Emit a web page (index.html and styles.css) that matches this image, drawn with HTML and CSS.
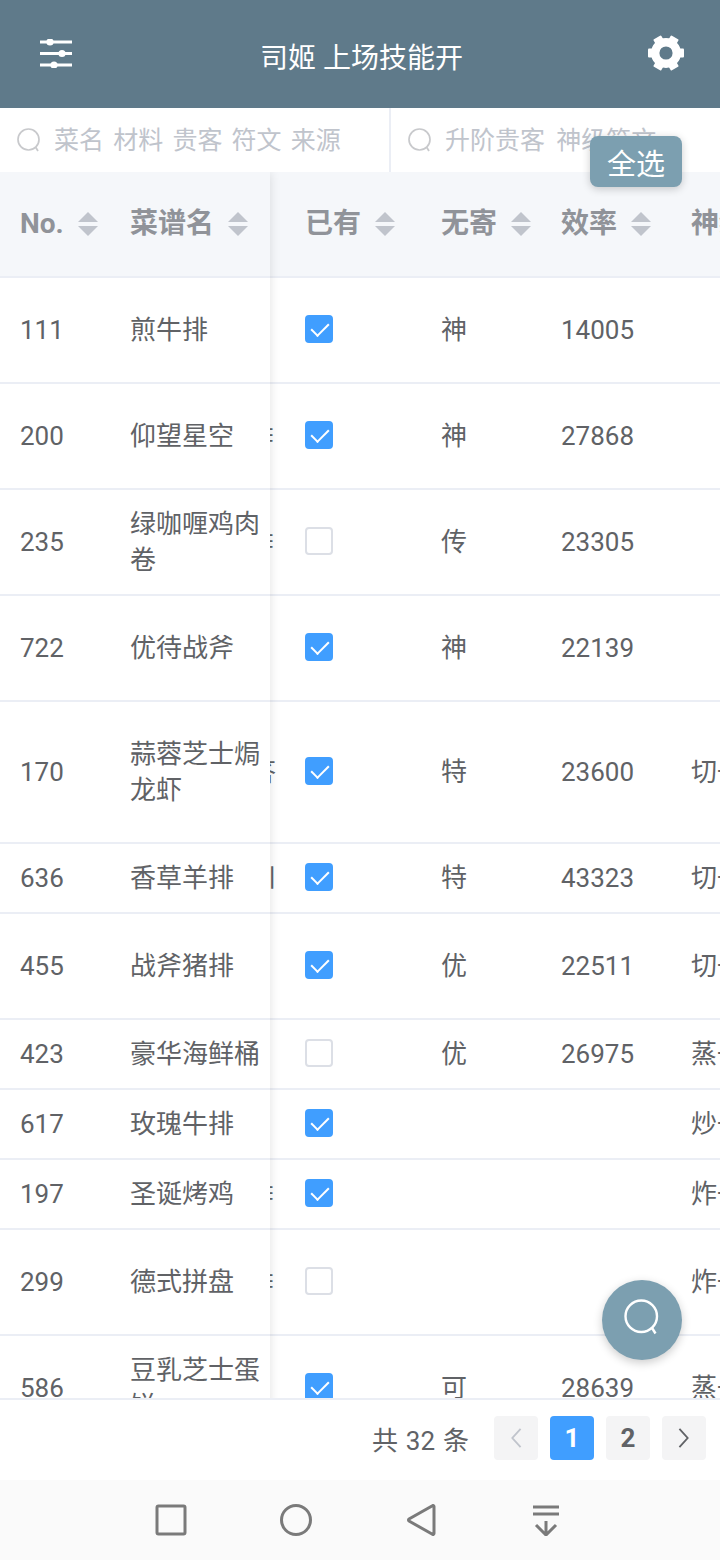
FILE: index.html
```html
<!DOCTYPE html>
<html lang="zh-CN">
<head>
    <meta charset="UTF-8">
    <meta name="viewport" content="width=device-width, initial-scale=1.0">
    <title>司姬 上场技能开</title>
    <link rel="stylesheet" href="styles.css">
</head>
<body>
    <div id="app">
        <header class="topbar">
            <svg class="topbar-icon sliders" viewBox="0 0 32 29">
                <path d="M0 3h32M0 14.500h32M0 26h32" stroke="#fff" stroke-width="2.800"/>
                <circle cx="10" cy="3" r="3.600" fill="#fff"/>
                <circle cx="22" cy="14.500" r="3.600" fill="#fff"/>
                <circle cx="14" cy="26" r="3.600" fill="#fff"/>
            </svg>
            <h1 class="title">司姬 上场技能开</h1>
            <svg class="topbar-icon gear" viewBox="0 0 36 36">
                <circle cx="18" cy="18" r="10.800" fill="none" stroke="#fff" stroke-width="8.400"/>
                <g fill="#fff">
                    <rect x="29" y="13.500" width="7" height="9" rx="1"/>
                    <rect x="29" y="13.500" width="7" height="9" rx="1" transform="rotate(60 18 18)"/>
                    <rect x="29" y="13.500" width="7" height="9" rx="1" transform="rotate(120 18 18)"/>
                    <rect x="29" y="13.500" width="7" height="9" rx="1" transform="rotate(180 18 18)"/>
                    <rect x="29" y="13.500" width="7" height="9" rx="1" transform="rotate(240 18 18)"/>
                    <rect x="29" y="13.500" width="7" height="9" rx="1" transform="rotate(300 18 18)"/>
                </g>
            </svg>
        </header>

        <div class="search-bar">
            <label class="search-box search-left">
                <svg class="search-icon" viewBox="0 0 24 24"><circle cx="11.500" cy="11.500" r="10.500"/><path d="M18.500 19l2.500 4"/></svg>
                <input class="search-input" type="text" placeholder="菜名 材料 贵客 符文 来源">
            </label>
            <label class="search-box search-right">
                <svg class="search-icon" viewBox="0 0 24 24"><circle cx="11.500" cy="11.500" r="10.500"/><path d="M18.500 19l2.500 4"/></svg>
                <input class="search-input" type="text" placeholder="升阶贵客 神级符文">
            </label>
            <button class="select-all">全选</button>
        </div>

        <div class="table">
            <div class="table-fixed">
                <div class="row row-head">
                    <div class="cell col-no"><span>No.</span><i class="caret"></i></div>
                    <div class="cell col-name"><span>菜谱名</span><i class="caret"></i></div>
                </div>
                <div class="row h106"><div class="cell col-no">111</div><div class="cell col-name">煎牛排</div></div>
                <div class="row h106"><div class="cell col-no">200</div><div class="cell col-name">仰望星空</div></div>
                <div class="row h106"><div class="cell col-no">235</div><div class="cell col-name">绿咖喱鸡肉卷</div></div>
                <div class="row h106"><div class="cell col-no">722</div><div class="cell col-name">优待战斧</div></div>
                <div class="row h142"><div class="cell col-no">170</div><div class="cell col-name">蒜蓉芝士焗龙虾</div></div>
                <div class="row h70"><div class="cell col-no">636</div><div class="cell col-name">香草羊排</div></div>
                <div class="row h106"><div class="cell col-no">455</div><div class="cell col-name">战斧猪排</div></div>
                <div class="row h70"><div class="cell col-no">423</div><div class="cell col-name">豪华海鲜桶</div></div>
                <div class="row h70"><div class="cell col-no">617</div><div class="cell col-name">玫瑰牛排</div></div>
                <div class="row h70"><div class="cell col-no">197</div><div class="cell col-name">圣诞烤鸡</div></div>
                <div class="row h106"><div class="cell col-no">299</div><div class="cell col-name">德式拼盘</div></div>
                <div class="row h106"><div class="cell col-no">586</div><div class="cell col-name">豆乳芝士蛋饼</div></div>
            </div>

            <div class="table-scroll">
                <div class="row row-head">
                    <div class="peek"></div>
                    <div class="cell col-own"><span>已有</span><i class="caret"></i></div>
                    <div class="cell col-guest"><span>无寄</span><i class="caret"></i></div>
                    <div class="cell col-rate"><span>效率</span><i class="caret"></i></div>
                    <div class="cell col-skill"><span>神级</span></div>
                </div>
                <div class="row h106">
                    <div class="peek"></div>
                    <div class="cell col-own"><i class="check on"></i></div>
                    <div class="cell col-guest">神</div>
                    <div class="cell col-rate">14005</div>
                    <div class="cell col-skill"></div>
                </div>
                <div class="row h106">
                    <div class="peek">≡</div>
                    <div class="cell col-own"><i class="check on"></i></div>
                    <div class="cell col-guest">神</div>
                    <div class="cell col-rate">27868</div>
                    <div class="cell col-skill"></div>
                </div>
                <div class="row h106">
                    <div class="peek">≡</div>
                    <div class="cell col-own"><i class="check"></i></div>
                    <div class="cell col-guest">传</div>
                    <div class="cell col-rate">23305</div>
                    <div class="cell col-skill"></div>
                </div>
                <div class="row h106">
                    <div class="peek"></div>
                    <div class="cell col-own"><i class="check on"></i></div>
                    <div class="cell col-guest">神</div>
                    <div class="cell col-rate">22139</div>
                    <div class="cell col-skill"></div>
                </div>
                <div class="row h142">
                    <div class="peek">答</div>
                    <div class="cell col-own"><i class="check on"></i></div>
                    <div class="cell col-guest">特</div>
                    <div class="cell col-rate">23600</div>
                    <div class="cell col-skill">切一</div>
                </div>
                <div class="row h70">
                    <div class="peek">川</div>
                    <div class="cell col-own"><i class="check on"></i></div>
                    <div class="cell col-guest">特</div>
                    <div class="cell col-rate">43323</div>
                    <div class="cell col-skill">切一</div>
                </div>
                <div class="row h106">
                    <div class="peek"></div>
                    <div class="cell col-own"><i class="check on"></i></div>
                    <div class="cell col-guest">优</div>
                    <div class="cell col-rate">22511</div>
                    <div class="cell col-skill">切一</div>
                </div>
                <div class="row h70">
                    <div class="peek"></div>
                    <div class="cell col-own"><i class="check"></i></div>
                    <div class="cell col-guest">优</div>
                    <div class="cell col-rate">26975</div>
                    <div class="cell col-skill">蒸一</div>
                </div>
                <div class="row h70">
                    <div class="peek"></div>
                    <div class="cell col-own"><i class="check on"></i></div>
                    <div class="cell col-guest"></div>
                    <div class="cell col-rate"></div>
                    <div class="cell col-skill">炒一</div>
                </div>
                <div class="row h70">
                    <div class="peek">≡</div>
                    <div class="cell col-own"><i class="check on"></i></div>
                    <div class="cell col-guest"></div>
                    <div class="cell col-rate"></div>
                    <div class="cell col-skill">炸一</div>
                </div>
                <div class="row h106">
                    <div class="peek">≡</div>
                    <div class="cell col-own"><i class="check"></i></div>
                    <div class="cell col-guest"></div>
                    <div class="cell col-rate"></div>
                    <div class="cell col-skill">炸一</div>
                </div>
                <div class="row h106">
                    <div class="peek"></div>
                    <div class="cell col-own"><i class="check on"></i></div>
                    <div class="cell col-guest">可</div>
                    <div class="cell col-rate">28639</div>
                    <div class="cell col-skill">蒸一</div>
                </div>
            </div>

            <button class="fab">
                <svg viewBox="0 0 24 24"><circle cx="11.500" cy="11.500" r="10.500"/><path d="M18.500 19l2.500 4"/></svg>
            </button>
        </div>

        <div class="pager">
            <span class="pager-total">共 32 条</span>
            <button class="page-btn disabled"><svg viewBox="0 0 14 24"><path d="M12 2L3 12l9 10"/></svg></button>
            <button class="page-btn active">1</button>
            <button class="page-btn">2</button>
            <button class="page-btn"><svg viewBox="0 0 14 24"><path d="M2 2l9 10-9 10"/></svg></button>
        </div>

        <nav class="navbar">
            <svg class="nav-icon" viewBox="0 0 32 32"><rect x="2" y="2" width="28" height="28" rx="1.500"/></svg>
            <svg class="nav-icon" viewBox="0 0 32 32"><circle cx="16" cy="16" r="14.500"/></svg>
            <svg class="nav-icon" viewBox="0 0 32 32"><path d="M29 2.500v27a1 1 0 0 1-1.600.8L4 17a1.200 1.200 0 0 1 0-2L27.400 1.700a1 1 0 0 1 1.600.8z"/></svg>
            <svg class="nav-icon" viewBox="0 0 32 32"><path d="M3 3h26M3 10h26M16 17v14M6 21l10 10 10-10"/></svg>
        </nav>
    </div>
</body>
</html>
```
FILE: styles.css
```css
* {
    box-sizing: border-box;
}

body {
    margin: 0;
    padding: 0;
    background-color: #ffffff;
    font-family: Roboto, "Noto Sans CJK SC", sans-serif;
    color: #606266;
}

#app {
    display: flex;
    flex-direction: column;
    width: 720px;
    height: 1560px;
    overflow: hidden;
}

.topbar {
    display: flex;
    align-items: center;
    justify-content: space-between;
    flex: 0 0 108px;
    padding: 0 36px 2px 40px;
    background-color: #5f7a8a;
}

.title {
    margin: 6px 0 0 3px;
    font-size: 28px;
    font-weight: 400;
    color: #ffffff;
}

.sliders {
    width: 32px;
    height: 29px;
}

.gear {
    width: 36px;
    height: 36px;
}

.search-bar {
    position: relative;
    z-index: 2;
    display: flex;
    flex: 0 0 64px;
}

.search-box {
    display: flex;
    align-items: center;
    height: 100%;
}

.search-left {
    flex: 0 0 391px;
    padding-left: 17px;
    border-right: 2px solid #ebeef5;
}

.search-right {
    flex: 1;
    padding-left: 17px;
    min-width: 0;
}

.search-icon {
    flex: none;
    width: 24px;
    height: 24px;
    fill: none;
    stroke: #c8c9cc;
    stroke-width: 1.7;
}

.search-input {
    flex: 1;
    min-width: 0;
    margin-left: 13px;
    padding: 0;
    border: none;
    outline: none;
    background: none;
    font-family: inherit;
    font-size: 25px;
    word-spacing: 3px;
}

.search-right .search-input {
    word-spacing: 5px;
}

.search-input::placeholder {
    color: #c0c4cc;
    opacity: 1;
}

.select-all {
    position: absolute;
    top: 28px;
    right: 38px;
    width: 92px;
    height: 51px;
    padding: 0;
    border: none;
    border-radius: 8px;
    background-color: #7c9fb0;
    box-shadow: 0 2px 8px rgba(0, 0, 0, 0.2);
    color: #ffffff;
    font-family: inherit;
    font-size: 29px;
}

.table {
    position: relative;
    display: flex;
    align-items: flex-start;
    flex: 1;
    min-height: 0;
    overflow: hidden;
}

.table-fixed {
    position: relative;
    z-index: 1;
    flex: 0 0 270px;
    background-color: #ffffff;
    box-shadow: 0 0 10px rgba(0, 0, 0, 0.12);
}

.table-scroll {
    flex: 1;
    min-width: 0;
    overflow: hidden;
}

.row {
    display: flex;
    align-items: center;
    border-bottom: 2px solid #ebeef5;
    font-size: 26px;
    line-height: 36px;
    white-space: nowrap;
}

.row-head {
    height: 106px;
    background-color: #f5f7fa;
    color: #909399;
    font-size: 28px;
    font-weight: 700;
}

.h70 {
    height: 70px;
}

.h106 {
    height: 106px;
}

.h142 {
    height: 142px;
}

.cell {
    display: flex;
    align-items: center;
    flex: none;
    padding-left: 20px;
}

.col-no {
    width: 110px;
}

.col-name {
    width: 160px;
    padding-right: 9px;
    white-space: normal;
}

.col-own {
    width: 136px;
}

.col-guest {
    width: 120px;
}

.col-rate {
    width: 130px;
}

.col-skill {
    width: 80px;
}

.peek {
    display: flex;
    justify-content: flex-end;
    flex: none;
    width: 6px;
    margin-right: 9px;
    overflow: hidden;
}

.caret {
    position: relative;
    flex: none;
    width: 20px;
    height: 24px;
    margin-left: 14px;
}

.caret::before,
.caret::after {
    content: "";
    position: absolute;
    left: 0;
    border-left: 10px solid transparent;
    border-right: 10px solid transparent;
}

.caret::before {
    top: 0;
    border-bottom: 10px solid #c0c4cc;
}

.caret::after {
    bottom: 0;
    border-top: 10px solid #c0c4cc;
}

.check {
    position: relative;
    display: block;
    width: 28px;
    height: 28px;
    margin-bottom: 2px;
    border: 2px solid #dcdfe6;
    border-radius: 4px;
    background-color: #ffffff;
}

.check.on {
    border-color: #409eff;
    background-color: #409eff;
}

.check.on::after {
    content: "";
    position: absolute;
    top: 2px;
    left: 8px;
    width: 8px;
    height: 15px;
    border: solid #ffffff;
    border-width: 0 2.500px 2.500px 0;
    transform: rotate(45deg);
}

.fab {
    position: absolute;
    top: 1108px;
    right: 38px;
    z-index: 2;
    width: 80px;
    height: 80px;
    padding: 0;
    border: none;
    border-radius: 50%;
    background-color: #7c9fb0;
    box-shadow: 0 3px 10px rgba(0, 0, 0, 0.2);
}

.fab svg {
    display: block;
    width: 36px;
    height: 36px;
    margin: -6px auto 0;
    fill: none;
    stroke: #ffffff;
    stroke-width: 1.6;
}

.pager {
    display: flex;
    align-items: center;
    justify-content: flex-end;
    flex: 0 0 82px;
    padding: 0 14px 4px 0;
    border-top: 2px solid #ebeef5;
    background-color: #ffffff;
}

.pager-total {
    margin-right: 25px;
    font-size: 26px;
    word-spacing: 1.5px;
}

.page-btn {
    width: 44px;
    height: 44px;
    margin-left: 12px;
    padding: 0;
    border: none;
    border-radius: 4px;
    background-color: #f4f4f5;
    color: #606266;
    font-family: inherit;
    font-size: 26px;
    font-weight: 700;
}

.page-btn:first-of-type {
    margin-left: 0;
}

.page-btn svg {
    display: block;
    width: 14px;
    height: 22px;
    margin: 0 auto;
    fill: none;
    stroke: #606266;
    stroke-width: 2;
}

.page-btn.disabled svg {
    stroke: #c0c4cc;
}

.page-btn.active {
    background-color: #409eff;
    color: #ffffff;
}

.navbar {
    display: flex;
    align-items: center;
    flex: 0 0 80px;
    gap: 93px;
    padding: 0 0 0 155px;
    background-color: #fafafa;
}

.nav-icon {
    flex: none;
    width: 32px;
    height: 32px;
    fill: none;
    stroke: #7a7a7a;
    stroke-width: 3;
}
```
